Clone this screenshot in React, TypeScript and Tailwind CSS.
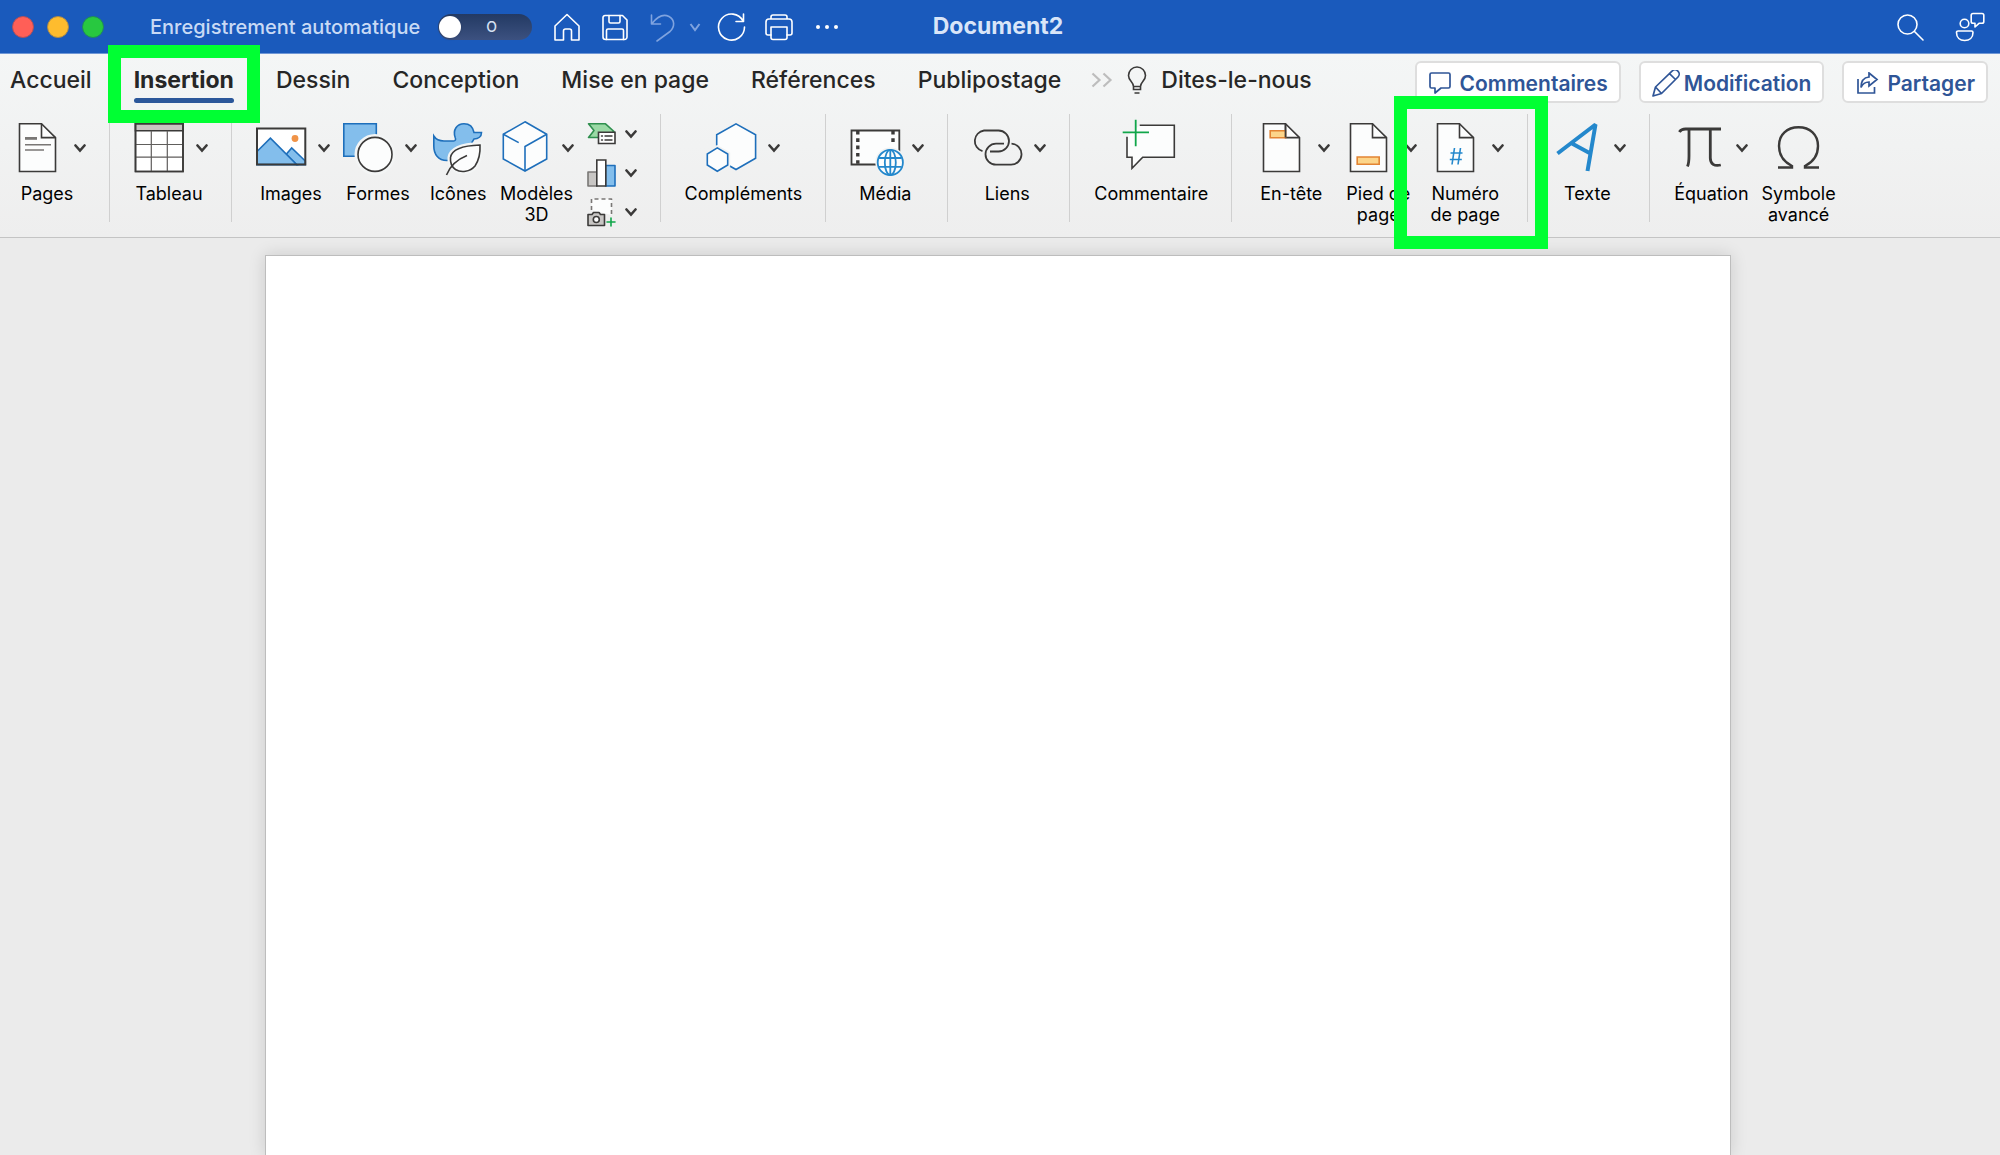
import React, { useState } from 'react';

interface IconProps {
  children: React.ReactNode;
  className?: string;
}

const RibbonIcon: React.FC<IconProps> = ({ children, className = 'text-[#3b3a39]' }) => (
  <svg
    viewBox="0 0 50 50"
    className={`w-[50px] h-[50px] shrink-0 overflow-visible ${className}`}
    fill="none"
    stroke="currentColor"
    strokeWidth="1.6"
    aria-hidden="true"
  >
    {children}
  </svg>
);

const BarIcon: React.FC<IconProps> = ({ children, className = 'text-white' }) => (
  <svg
    viewBox="0 0 28 28"
    className={`w-7 h-7 shrink-0 overflow-visible ${className}`}
    fill="none"
    stroke="currentColor"
    strokeWidth="1.6"
    strokeLinejoin="round"
    strokeLinecap="round"
    aria-hidden="true"
  >
    {children}
  </svg>
);

const Chevron = () => (
  <svg viewBox="0 0 12 12" className="w-3 h-3 shrink-0 text-[#3b3a39]" fill="none" stroke="currentColor" strokeWidth="2.6" aria-hidden="true">
    <path d="M1.5 3.5 6 8.5l4.5-5" strokeLinecap="round" />
  </svg>
);

const Sheet = () => (
  <>
    <path d="M7.5 .8H29.5L43.5 14.6V48.5H7.5Z" fill="#fcfdfd" />
    <path d="M29.5 .8V14.6H43.5" />
  </>
);

const PagesIcon = () => (
  <RibbonIcon>
    <Sheet />
    <path d="M13 15.4h12" stroke="#797775" strokeWidth="2.8" />
    <path d="M13 21.7h26M13 27h19" stroke="#797775" strokeWidth="1.4" />
  </RibbonIcon>
);

const TableIcon = () => (
  <RibbonIcon>
    <path d="M1.5 .8H49V48.5H1.5Z" fill="#fff" />
    <path d="M1.5 .8H49v7H1.5Z" fill="#c8c6c4" />
    <path d="M17.3 7.8v40.7M33.3 7.8v40.7M1.5 21.5H49M1.5 34.2H49" stroke="#605e5c" strokeWidth="1.2" />
    <path d="M1.5 .8H49V48.5H1.5Z" />
  </RibbonIcon>
);

const ImagesIcon = () => (
  <RibbonIcon>
    <path d="M1 5.6h48.3v36H1Z" fill="#fff" stroke="none" />
    <g fill="#83beec" stroke="#1e6fbb">
      <path d="M30 31.5 35.7 25 49.3 38v3.6H40.5Z" />
      <path d="M1 28.5 14.4 15.2 40.8 41.6H1Z" />
    </g>
    <circle cx="39" cy="15.5" r="3.4" fill="#f09347" stroke="none" />
    <path d="M1 5.6h48.3v36H1Z" strokeWidth="2" />
  </RibbonIcon>
);

const ShapesIcon = () => (
  <RibbonIcon>
    <path d="M.8 .8h32.5v32.5H.8Z" fill="#83beec" stroke="#1e6fbb" />
    <circle cx="32" cy="31.4" r="18.5" stroke="#f3f5f5" strokeWidth="4" />
    <circle cx="32" cy="31.4" r="17" fill="#fcfdfd" />
  </RibbonIcon>
);

const DuckIcon = () => (
  <RibbonIcon>
    <path
      d="M.8 13C3 16.5 6.5 18 11 18H20.5C22.5 18 23 16.5 22.2 14.5 19.5 7 24 .7 31 .7 36.5 .7 40 4 41 9.5H48.5C48.5 13.5 45.5 16 41 16 39 18.5 38.5 20 38.5 22 38 32 33 37.5 24 37.5H14C5 37.5 .8 31 .8 23Z"
      fill="#83beec"
      stroke="#1e6fbb"
    />
    <path d="M47 22C32 22.5 19 25 17.5 34.5 17 40 19 44 22.5 46.5 28 50 37 49 42 43 46 37 47.5 31 47 22Z" fill="#f3f5f5" stroke="#f3f5f5" strokeWidth="6" />
    <path d="M47 22C32 22.5 19 25 17.5 34.5 17 40 19 44 22.5 46.5 28 50 37 49 42 43 46 37 47.5 31 47 22Z" fill="#fcfdfd" />
    <path d="M13.5 52C17 43 24 36.5 34 32.5" />
  </RibbonIcon>
);

const CubeIcon = () => (
  <RibbonIcon className="text-[#1e6fbb]">
    <path d="M25-1.2 46.7 11.3V36L25 48 3.3 36V11.3Z" fill="#fcfdfd" />
    <path d="M3.3 11.3 18.7 19.6M46.7 11.3 25 23.5V48" />
  </RibbonIcon>
);

const AddInsIcon = () => (
  <RibbonIcon className="text-[#1e6fbb]">
    <path d="M10.7 22.7v-11L30 .8l19.6 10.9v23.6L30 46.5l-6.7-3.8" fill="#fcfdfd" />
    <path d="M11.3 24.9 21.7 31v11L11.3 48.2 1.3 42V31Z" stroke="#f1f2f2" strokeWidth="5" />
    <path d="M11.3 24.9 21.7 31v11L11.3 48.2 1.3 42V31Z" fill="#fcfdfd" />
  </RibbonIcon>
);

const MediaIcon = () => (
  <RibbonIcon>
    <path d="M1.5 7.5h47.8v34H1.5Z" fill="#fcfdfd" strokeWidth="1.8" />
    <path d="M7.8 8v33M43 8v12" strokeWidth="3.4" strokeDasharray="3.6 3.7" />
    <circle cx="40.3" cy="39.4" r="15" fill="#f1f2f2" stroke="none" />
    <g stroke="#2488cc" strokeWidth="1.8">
      <circle cx="40.3" cy="39.4" r="12.6" fill="#fcfdfd" />
      <ellipse cx="40.3" cy="39.4" rx="5.5" ry="12.6" />
      <path d="M29 35h22.6M29 43.8h22.6M40.3 27v25" />
    </g>
  </RibbonIcon>
);

const LinkIcon = () => (
  <RibbonIcon>
    <path d="M10.5 28.2A10.6 10.6 0 0 1 12 7.5h14.5a10.5 10.5 0 0 1 0 21H18" strokeWidth="1.8" />
    <path d="M39.5 20.7a10.5 10.5 0 0 1-1 21H24a10.5 10.5 0 0 1 0-21h8" strokeWidth="1.8" />
  </RibbonIcon>
);

const CommentIcon = () => (
  <RibbonIcon>
    <path d="M1 13.7 13.7 2.3H48.3V34.3H16.7L6 45.3V34.3H1Z" fill="#fcfdfd" stroke="none" />
    <path d="M13.7 2.3H48.3V34.3H16.7L6 45.3V34.3H1V13.7" />
    <path d="M-3.3 9.3H23M9.7-3.3V23.3" stroke="#10a64a" strokeWidth="1.8" />
  </RibbonIcon>
);

const HeaderIcon = () => (
  <RibbonIcon>
    <Sheet />
    <path d="M14.2 7.8h15.3v7H14.2Z" fill="#fcd58a" stroke="#e28433" />
    <path d="M29.5 .8V14.6" />
  </RibbonIcon>
);

const FooterIcon = () => (
  <RibbonIcon>
    <Sheet />
    <path d="M14.2 34h22v7.2h-22Z" fill="#fcd58a" stroke="#e28433" />
  </RibbonIcon>
);

const PageNumberIcon = () => (
  <RibbonIcon>
    <Sheet />
    <path d="M24.5 25 22 41.5M30.5 25 28 41.5M20.5 30h12M19.8 36.5h12" stroke="#2488cc" />
  </RibbonIcon>
);

const TextIcon = () => (
  <RibbonIcon className="text-[#2488cc]">
    <path d="M5.5 30.5 43.5 1.5 35.5 48M20 20.5 37.5 30" strokeWidth="4" strokeLinejoin="bevel" />
  </RibbonIcon>
);

const EquationIcon = () => (
  <RibbonIcon>
    <path d="M5.3 9C7 6.5 8.5 6 11.5 6H47M15 6v27c0 5-.4 8-1.5 10.5M36.3 6v29c0 6 4 8.5 10.5 7" strokeWidth="2.8" />
  </RibbonIcon>
);

const SymbolIcon = () => (
  <RibbonIcon>
    <path d="M4 44.5H18V43C10 39 5 32 5 23 5 11.5 13 4.3 24.5 4.3S44 11.5 44 23c0 9-5 16-13 20v1.5H45" strokeWidth="2.4" />
  </RibbonIcon>
);

interface RibbonItemProps {
  icon: React.ReactNode;
  label: string[];
  menu?: boolean;
  wide?: boolean;
  highlighted?: boolean;
}

const RibbonItem: React.FC<RibbonItemProps> = ({ icon, label, menu = true, wide, highlighted }) => (
  <button type="button" className="relative flex flex-col items-center pt-[9px]">
    <span className="flex items-center gap-3">
      {icon}
      {menu && <Chevron />}
    </span>
    <span className={`mt-[10px] text-[18px] leading-[21px] text-black ${menu && !wide ? 'pr-1' : ''}`}>
      {label.map(line => (
        <span key={line} className="block whitespace-nowrap">{line}</span>
      ))}
    </span>
    {highlighted && (
      <span className="absolute z-10 -left-9 -top-[18px] w-[154px] h-[153px] border-[13px] border-[#00ff33] pointer-events-none" />
    )}
  </button>
);

const Group: React.FC<{ children: React.ReactNode; first?: boolean }> = ({ children, first }) => (
  <div className={`flex items-start gap-[13px] pr-[23px] ${first ? 'pl-3' : 'pl-6'}`}>{children}</div>
);

const Separator = () => <div className="w-px h-[108px] bg-[#d0d0d0]" />;

const SmallTools = () => (
  <div className="flex flex-col gap-[11px] pt-[6px]">
    <button type="button" className="flex items-center gap-[10px]" aria-label="SmartArt">
      <BarIcon className="text-[#3b3a39]">
        <path d="M1.5 3.8H18.5L27 11.5 18 17.5H1.5L7 10.5Z" fill="#9ad9a5" stroke="#2f8f4e" />
        <path d="M11.5 12.2H28V23.5H11.5Z" fill="#fff" strokeLinejoin="miter" />
        <path d="M14.5 16h1M18 16h7M14.5 20h1M18 20h7" strokeWidth="1.4" />
      </BarIcon>
      <Chevron />
    </button>
    <button type="button" className="flex items-center gap-[10px]" aria-label="Graphique">
      <BarIcon className="text-[#3b3a39]">
        <path d="M1 13h9v14H1Z" fill="#c8c6c4" stroke="#797775" />
        <path d="M18.5 6.5H28V27H18.5Z" fill="#83beec" stroke="#1e6fbb" />
        <path d="M9.8 1h9V27h-9Z" fill="#fff" strokeLinejoin="miter" />
      </BarIcon>
      <Chevron />
    </button>
    <button type="button" className="flex items-center gap-[10px]" aria-label="Capture">
      <BarIcon className="text-[#3b3a39]">
        <path d="M4.5 12V1h20v16" fill="#fcfdfd" stroke="#797775" strokeDasharray="4 3" strokeLinecap="butt" />
        <path d="M1 16.5h4l1.5-2H12l1.5 2h4V27.5H1Z" fill="#c8c6c4" />
        <circle cx="9.3" cy="21.5" r="3" fill="#fff" />
        <path d="M20 24h8M24 20v8" stroke="#10a64a" />
      </BarIcon>
      <Chevron />
    </button>
  </div>
);

const TitleBar = () => {
  const [autoSave, setAutoSave] = useState(false);

  return (
    <header className="grid grid-cols-[1fr_auto_1fr] items-center h-[54px] bg-[#1a5abc] border-b border-[#6f97d6]">
      <div className="flex items-center pl-3">
        <div className="flex gap-[13px]">
          <button type="button" aria-label="Fermer" className="w-[22px] h-[22px] rounded-full bg-[#ff5f57] border border-[#b0505a]" />
          <button type="button" aria-label="Réduire" className="w-[22px] h-[22px] rounded-full bg-[#febc2e] border border-[#a98a4c]" />
          <button type="button" aria-label="Agrandir" className="w-[22px] h-[22px] rounded-full bg-[#28c840] border border-[#1f8a5a]" />
        </div>
        <label htmlFor="auto-save" className="ml-[46px] text-[20px] font-medium text-[#c9daf5] whitespace-nowrap">
          Enregistrement automatique
        </label>
        <span className="relative ml-[18px] w-[94px] h-[26px] shrink-0">
          <input
            id="auto-save"
            type="checkbox"
            role="switch"
            checked={autoSave}
            onChange={(e) => setAutoSave(e.target.checked)}
            className="block w-full h-full appearance-none rounded-full bg-linear-to-b from-[#233a63] to-[#3c5180] cursor-pointer"
          />
          <span className={`absolute top-[2px] w-[22px] h-[22px] rounded-full bg-white shadow pointer-events-none ${autoSave ? 'right-px' : 'left-px'}`} />
          <span className="absolute inset-y-0 left-12 flex items-center text-[14px] font-medium text-[#d5e0f2] pointer-events-none">O</span>
        </span>

        <div className="flex items-center gap-5 ml-[21px]">
          <button type="button" aria-label="Accueil">
            <BarIcon><path d="M2 13 14 1.5 26 13V27H18.5V18a2 2 0 0 0-2-2h-4a2 2 0 0 0-2 2v9H2Z" /></BarIcon>
          </button>
          <button type="button" aria-label="Enregistrer">
            <BarIcon>
              <path d="M4 2.5H21.5L26 7V24a2.5 2.5 0 0 1-2.5 2.5H4.5A2.5 2.5 0 0 1 2 24V4.5A2 2 0 0 1 4 2.5Z" />
              <path d="M8 2.5V8.5a1.5 1.5 0 0 0 1.5 1.5h8A1.5 1.5 0 0 0 19 8.5V2.5M5.5 26.5V17.5A1.5 1.5 0 0 1 7 16H21a1.5 1.5 0 0 1 1.5 1.5v9" />
            </BarIcon>
          </button>
          <button type="button" aria-label="Annuler" className="flex items-center gap-3">
            <BarIcon className="text-[#7fa3df]">
              <path d="M2.5 2V11H11.5M3 10.5C9 3 15 1 20 3.5 26 7 26 13.5 21 18.5L8 28" />
            </BarIcon>
            <svg viewBox="0 0 12 12" className="w-3 h-3 text-[#7fa3df]" fill="none" stroke="currentColor" strokeWidth="2" aria-hidden="true">
              <path d="M1.5 3 6 9l4.5-6" />
            </svg>
          </button>
          <button type="button" aria-label="Rétablir" className="-ml-1">
            <BarIcon><path d="M26.5 1V8.5H19M26 8A13 13 0 1 0 27.5 14" /></BarIcon>
          </button>
          <button type="button" aria-label="Imprimer">
            <BarIcon>
              <path d="M6 22H3A2 2 0 0 1 1 20V9A3 3 0 0 1 4 6H24A3 3 0 0 1 27 9V20A2 2 0 0 1 25 22H22M6 6V4A2 2 0 0 1 8 2H20A2 2 0 0 1 22 4V6" />
              <path d="M6 14H22V24.5A2 2 0 0 1 20 26.5H8A2 2 0 0 1 6 24.5Z" />
            </BarIcon>
          </button>
          <button type="button" aria-label="Plus">
            <BarIcon>
              <g fill="currentColor" stroke="none">
                <circle cx="5" cy="14" r="2" />
                <circle cx="14" cy="14" r="2" />
                <circle cx="23" cy="14" r="2" />
              </g>
            </BarIcon>
          </button>
        </div>
      </div>

      <h1 className="pr-1 text-[23px] font-bold text-[#d9e5f8]">Document2</h1>

      <div className="flex items-center justify-end gap-8 pr-4">
        <button type="button" aria-label="Rechercher">
          <BarIcon><circle cx="11.5" cy="11.5" r="9.5" /><path d="M18.5 18.5 27 27" /></BarIcon>
        </button>
        <button type="button" aria-label="Présence">
          <BarIcon>
            <circle cx="8.5" cy="10.5" r="4.3" />
            <path d="M2 18H15.5A1.5 1.5 0 0 1 17 19.5C17 24.5 13.5 27.5 8.7 27.5S.5 24.5 .5 19.5A1.5 1.5 0 0 1 2 18Z" />
            <path d="M17 .5H26A1.8 1.8 0 0 1 27.8 2.3V8.5A1.8 1.8 0 0 1 26 10.3H23L19 14V10.3H17A1.8 1.8 0 0 1 15.2 8.5V2.3A1.8 1.8 0 0 1 17 .5Z" />
          </BarIcon>
        </button>
      </div>
    </header>
  );
};

const tabs = ['Accueil', 'Insertion', 'Dessin', 'Conception', 'Mise en page', 'Références', 'Publipostage'];

const TabBar = () => {
  const [activeTab, setActiveTab] = useState('Insertion');

  return (
    <div className="flex justify-between h-[60px] pl-[10px] pr-3 text-[#262626]">
      <nav className="flex items-start gap-[42px] pt-2 text-[23px] leading-9 font-medium whitespace-nowrap">
        {tabs.map(tab => (
          <button key={tab} type="button" onClick={() => setActiveTab(tab)} className={`relative ${tab === activeTab ? 'font-bold' : ''}`}>
            {tab}
            {tab === activeTab && (
              <>
                <span className="absolute inset-x-0 top-9 h-[5px] rounded-full bg-[#2b579a]" />
                <span className="absolute z-10 -inset-x-[26px] -top-[17px] h-[78px] border-[13px] border-[#00ff33] pointer-events-none" />
              </>
            )}
          </button>
        ))}
        <div className="flex items-center gap-[14px] -ml-3">
          <button type="button" aria-label="Autres onglets" className="h-9">
            <svg viewBox="0 0 22 16" className="w-[22px] h-4" fill="none" stroke="#bdbdbd" strokeWidth="2.2" aria-hidden="true">
              <path d="M1.5 1.5 8.5 8l-7 6.5M12.5 1.5 19.5 8l-7 6.5" />
            </svg>
          </button>
          <button type="button" className="flex items-center gap-[14px]">
            <svg viewBox="0 0 20 28" className="w-5 h-7" fill="none" stroke="#3b3a39" strokeWidth="1.6" aria-hidden="true">
              <path d="M6.5 20.5C6.5 16 1.5 15 1.5 9.5a8.5 8.5 0 0 1 17 0c0 5.5-5 6.5-5 11ZM6.5 20.5v3h7v-3M7.5 27h5" />
            </svg>
            Dites-le-nous
          </button>
        </div>
      </nav>

      <div className="flex gap-[18px] pt-[7px] text-[21px] font-semibold text-[#2f5597]">
        <button type="button" className="flex items-center gap-2 h-[42px] px-[11px] pt-[3px] bg-white border-2 border-[#dedede] rounded-md">
          <svg viewBox="0 0 24 24" className="w-6 h-6" fill="none" stroke="currentColor" strokeWidth="1.7" strokeLinejoin="round" aria-hidden="true">
            <path d="M3.5 1H20.5A1.5 1.5 0 0 1 22 2.5V14.5A1.5 1.5 0 0 1 20.5 16H13L7 21V16H3.5A1.5 1.5 0 0 1 2 14.5V2.5A1.5 1.5 0 0 1 3.5 1Z" />
          </svg>
          Commentaires
        </button>
        <button type="button" className="flex items-center gap-1 h-[42px] px-[11px] pt-[3px] bg-white border-2 border-[#dedede] rounded-md">
          <svg viewBox="0 0 28 28" className="w-7 h-7" fill="none" stroke="currentColor" strokeWidth="1.7" strokeLinejoin="round" aria-hidden="true">
            <path d="M1 26 3.5 17 20 1.2A3.6 3.6 0 0 1 26 7L9.5 23.5ZM3.5 17 9.5 23.5M17.5 3.7 23.5 9.5" />
          </svg>
          Modification
        </button>
        <button type="button" className="flex items-center gap-2 h-[42px] px-[11px] pt-[3px] bg-white border-2 border-[#dedede] rounded-md">
          <svg viewBox="0 0 24 24" className="w-6 h-6" fill="none" stroke="currentColor" strokeWidth="1.7" aria-hidden="true">
            <path d="M3 7V21H19.5V15M14 1 22 7.5 14 14V10C10 10 7.5 12 6 15.5 6 9.5 9 5.5 14 5Z" />
          </svg>
          Partager
        </button>
      </div>
    </div>
  );
};

export default function App() {
  return (
    <div className="flex flex-col min-h-screen bg-[#ebebeb] font-['Inter',sans-serif]">
      <TitleBar />

      <div className="bg-linear-to-b from-[#f4f6f6] to-[#eeeeee] border-b border-[#c4c4c4]">
        <TabBar />
        <div className="flex items-start pb-[11px]">
          <Group first>
            <RibbonItem icon={<PagesIcon />} label={['Pages']} />
          </Group>
          <Separator />
          <Group>
            <RibbonItem icon={<TableIcon />} label={['Tableau']} />
          </Group>
          <Separator />
          <Group>
            <RibbonItem icon={<ImagesIcon />} label={['Images']} />
            <RibbonItem icon={<ShapesIcon />} label={['Formes']} />
            <RibbonItem icon={<DuckIcon />} label={['Icônes']} menu={false} />
            <RibbonItem icon={<CubeIcon />} label={['Modèles', '3D']} wide />
            <SmallTools />
          </Group>
          <Separator />
          <Group>
            <RibbonItem icon={<AddInsIcon />} label={['Compléments']} wide />
          </Group>
          <Separator />
          <Group>
            <RibbonItem icon={<MediaIcon />} label={['Média']} />
          </Group>
          <Separator />
          <Group>
            <RibbonItem icon={<LinkIcon />} label={['Liens']} />
          </Group>
          <Separator />
          <Group>
            <RibbonItem icon={<CommentIcon />} label={['Commentaire']} menu={false} />
          </Group>
          <Separator />
          <Group>
            <RibbonItem icon={<HeaderIcon />} label={['En-tête']} />
            <RibbonItem icon={<FooterIcon />} label={['Pied de', 'page']} />
            <RibbonItem icon={<PageNumberIcon />} label={['Numéro', 'de page']} highlighted />
          </Group>
          <Separator />
          <Group>
            <RibbonItem icon={<TextIcon />} label={['Texte']} />
          </Group>
          <Separator />
          <Group>
            <RibbonItem icon={<EquationIcon />} label={['Équation']} wide />
            <RibbonItem icon={<SymbolIcon />} label={['Symbole', 'avancé']} menu={false} />
          </Group>
        </div>
      </div>

      <main className="flex flex-col flex-1 pt-[17px] pr-1">
        <div className="flex-1 w-[73.4%] mx-auto bg-white border border-b-0 border-[#bdbdbd] shadow-[0_0_16px_rgba(0,0,0,0.14)]" />
      </main>
    </div>
  );
}
